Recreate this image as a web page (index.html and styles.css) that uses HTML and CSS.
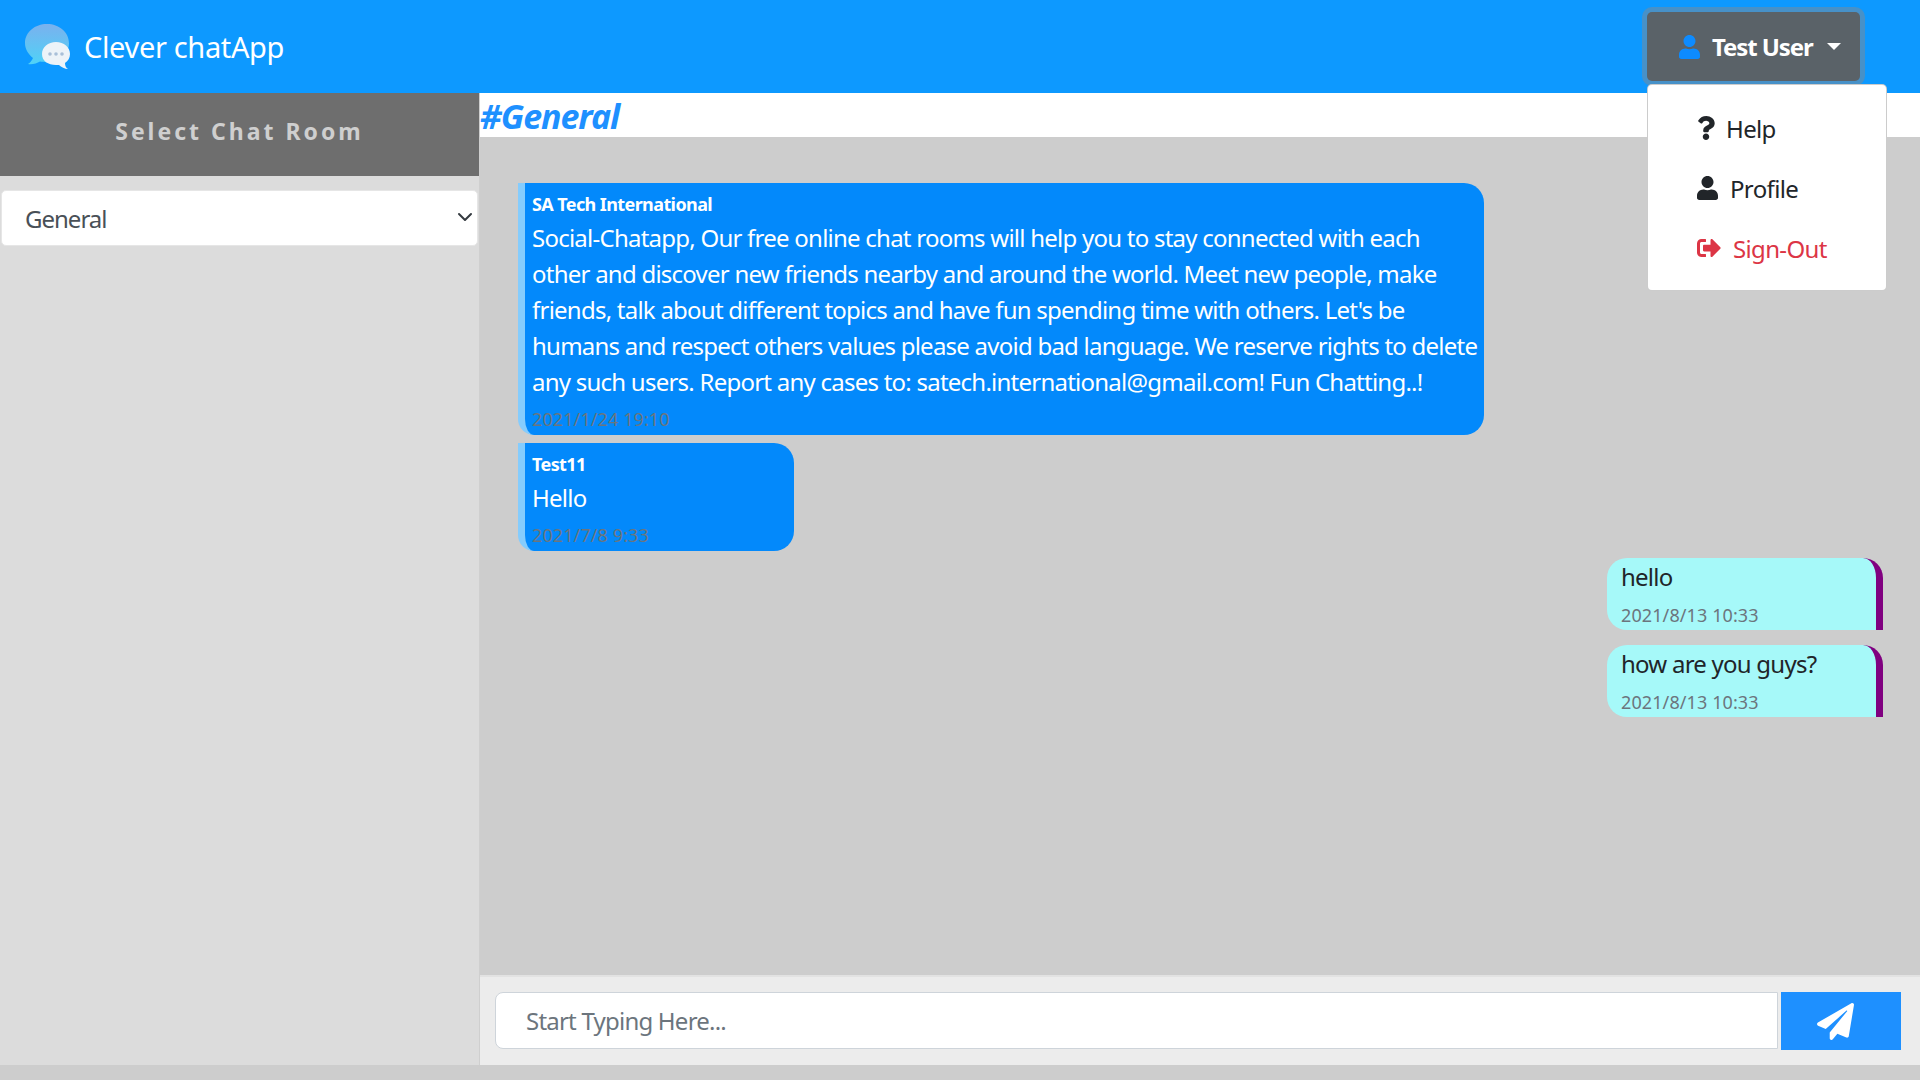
FILE: index.html
```html
<!DOCTYPE html>
<html lang="en">
<head>
    <meta charset="UTF-8">
    <meta name="viewport" content="width=device-width, initial-scale=1.0">
    <title>Clever chatApp</title>
    <link rel="stylesheet" href="styles.css">
</head>
<body>
    <header class="topbar">
        <div class="brand">
            <svg class="brand-logo" viewBox="0 0 46 46">
                <defs>
                    <linearGradient id="bubbleFill" x1="0" y1="0" x2="0" y2="1">
                        <stop offset="0" stop-color="#7ab1ee"/>
                        <stop offset="1" stop-color="#4fd2f7"/>
                    </linearGradient>
                </defs>
                <path d="M22 0C10 0 0 8 0 19c0 6 3 11 8 15-1 2-3 5-5 6 4 .6 9-.4 12-2.400 2 .4 4 .6 7 .6 12 0 22-8 22-19S34 0 22 0z" fill="url(#bubbleFill)"/>
                <path d="M31 18c-8 0-14 5-14 12s6 11 14 11h3c2 2 6 4 9 4-2-1-3-3-3-6 3-2 5-5 5-9 0-7-6-12-14-12z" fill="#edf3f8"/>
                <circle cx="25" cy="30" r="1.800" fill="#a9bfd8"/>
                <circle cx="31" cy="30" r="1.800" fill="#a9bfd8"/>
                <circle cx="37" cy="30" r="1.800" fill="#a9bfd8"/>
            </svg>
            <span class="brand-name">Clever chatApp</span>
        </div>
        <div class="user-menu">
            <button type="button" class="user-button">
                <svg class="icon user-icon" viewBox="0 0 448 512"><path d="M224 256c70.700 0 128-57.300 128-128S294.700 0 224 0 96 57.300 96 128s57.300 128 128 128zm89.600 32h-16.700c-22.200 10.200-46.900 16-72.900 16s-50.600-5.800-72.900-16h-16.700C60.200 288 0 348.200 0 422.400V464c0 26.500 21.500 48 48 48h352c26.500 0 48-21.500 48-48v-41.600c0-74.200-60.200-134.400-134.400-134.400z"/></svg>
                <span>Test User</span>
                <span class="caret"></span>
            </button>
            <div class="dropdown">
                <a class="dropdown-item">
                    <svg class="icon help-icon" viewBox="0 0 384 512"><path d="M202.021 0C122.202 0 70.503 32.703 29.914 91.026c-7.363 10.580-5.093 25.086 5.178 32.874l43.138 32.709c10.373 7.865 25.132 6.026 33.253-4.148 25.049-31.381 43.630-49.449 82.757-49.449 30.764 0 68.816 19.799 68.816 49.631 0 22.552-18.617 34.134-48.993 51.164-35.423 19.860-82.299 44.576-82.299 106.405V320c0 13.255 10.745 24 24 24h72.471c13.255 0 24-10.745 24-24v-5.773c0-42.860 125.268-44.645 125.268-160.627C377.504 66.256 286.902 0 202.021 0zM192 373.459c-38.196 0-69.271 31.075-69.271 69.271 0 38.195 31.075 69.270 69.271 69.270s69.271-31.075 69.271-69.271-31.075-69.270-69.271-69.270z"/></svg>
                    <span>Help</span>
                </a>
                <a class="dropdown-item">
                    <svg class="icon profile-icon" viewBox="0 0 448 512"><path d="M224 256c70.700 0 128-57.300 128-128S294.700 0 224 0 96 57.300 96 128s57.300 128 128 128zm89.600 32h-16.700c-22.200 10.200-46.900 16-72.900 16s-50.600-5.800-72.900-16h-16.700C60.200 288 0 348.200 0 422.400V464c0 26.500 21.500 48 48 48h352c26.500 0 48-21.500 48-48v-41.600c0-74.200-60.200-134.400-134.400-134.400z"/></svg>
                    <span>Profile</span>
                </a>
                <a class="dropdown-item danger">
                    <svg class="icon signout-icon" viewBox="0 0 512 512"><path d="M497 273L329 441c-15 15-41 4.500-41-17v-96H152c-13.300 0-24-10.700-24-24v-96c0-13.300 10.700-24 24-24h136V88c0-21.400 25.900-32 41-17l168 168c9.300 9.400 9.300 24.600 0 34zM192 436v-40c0-6.600-5.400-12-12-12H96c-17.700 0-32-14.300-32-32V160c0-17.700 14.300-32 32-32h84c6.600 0 12-5.400 12-12V76c0-6.600-5.400-12-12-12H96c-53 0-96 43-96 96v192c0 53 43 96 96 96h84c6.600 0 12-5.400 12-12z"/></svg>
                    <span>Sign-Out</span>
                </a>
            </div>
        </div>
    </header>

    <div class="layout">
        <aside class="sidebar">
            <h2 class="sidebar-title">Select Chat Room</h2>
            <div class="room-select">
                <span>General</span>
                <svg class="chevron" viewBox="0 0 16 16"><path fill="none" stroke="#343a40" stroke-linecap="round" stroke-linejoin="round" stroke-width="2" d="M2 5l6 6 6-6"/></svg>
            </div>
        </aside>

        <main class="chat">
            <h1 class="room-title">#General</h1>
            <div class="messages">
                <div class="message incoming wide">
                    <div class="sender">SA Tech International</div>
                    <p class="text">Social-Chatapp, Our free online chat rooms will help you to stay connected with each<br>other and discover new friends nearby and around the world. Meet new people, make<br>friends, talk about different topics and have fun spending time with others. Let's be<br>humans and respect others values please avoid bad language. We reserve rights to delete<br>any such users. Report any cases to: satech.international@gmail.com! Fun Chatting..!</p>
                    <div class="time">2021/1/24 19:10</div>
                </div>
                <div class="message incoming narrow">
                    <div class="sender">Test11</div>
                    <p class="text">Hello</p>
                    <div class="time">2021/7/8 9:33</div>
                </div>
                <div class="message outgoing">
                    <p class="text">hello</p>
                    <div class="time">2021/8/13 10:33</div>
                </div>
                <div class="message outgoing">
                    <p class="text">how are you guys?</p>
                    <div class="time">2021/8/13 10:33</div>
                </div>
            </div>
            <form class="composer">
                <input type="text" class="composer-input" placeholder="Start Typing Here...">
                <button type="button" class="send-button">
                    <svg class="icon send-icon" viewBox="0 0 512 512"><path d="M476 3.200L12.500 270.600c-18.100 10.400-15.800 35.600 2.200 43.200L121 358.400l287.300-253.200c5.500-4.900 13.300 2.600 8.600 8.300L176 407v80.500c0 23.600 28.500 32.900 42.500 15.800L282 426l124.600 52.200c14.200 6 30.400-2.900 33-18.200l72-432C515 7.800 493.300-6.800 476 3.200z"/></svg>
                </button>
            </form>
        </main>
    </div>
</body>
</html>
```

FILE: styles.css
```css
* {
    box-sizing: border-box;
}

body {
    font-family: "Noto Sans", "Open Sans", Arial, sans-serif;
    margin: 0;
    height: 100vh;
    overflow: hidden;
    background-color: #cdcdcd;
    color: #212529;
}

.icon {
    fill: currentColor;
    flex-shrink: 0;
}

/* top bar */
.topbar {
    height: 93px;
    background-color: #0d99ff;
    display: flex;
    justify-content: space-between;
    padding-left: 25px;
}

.brand {
    display: flex;
    align-items: center;
    gap: 13px;
}

.brand-logo {
    width: 46px;
    height: 46px;
}

.brand-name {
    color: #fff;
    font-size: 29px;
    letter-spacing: -0.35px;
}

.user-menu {
    position: relative;
    width: 273px;
    padding-top: 12px;
}

.user-button {
    width: 213px;
    height: 69px;
    display: flex;
    align-items: center;
    padding: 0 0 0 32px;
    border: none;
    border-radius: 5px;
    background-color: #5a6268;
    box-shadow: 0 0 0 5px rgba(130, 138, 145, 0.5);
    color: #fff;
    font-family: inherit;
    font-size: 24px;
    font-weight: 700;
    letter-spacing: -1.1px;
}

.user-icon {
    width: 21px;
    height: 24px;
    margin-right: 12px;
    color: #0d8bff;
}

.caret {
    margin-left: 14px;
    border-top: 7px solid #fff;
    border-left: 7px solid transparent;
    border-right: 7px solid transparent;
}

.dropdown {
    position: absolute;
    top: 84px;
    left: 0;
    width: 240px;
    height: 207px;
    padding: 13px 0 0 49px;
    background-color: #fff;
    border: 1px solid rgba(0, 0, 0, 0.2);
    border-radius: 5px;
    z-index: 10;
}

.dropdown-item {
    height: 60px;
    display: flex;
    align-items: center;
    font-size: 24px;
    letter-spacing: -0.65px;
}

.dropdown-item.danger {
    color: #dc3545;
}

.help-icon {
    width: 18px;
    height: 24px;
    margin-right: 11px;
}

.profile-icon {
    width: 21px;
    height: 24px;
    margin-right: 12px;
}

.signout-icon {
    width: 24px;
    height: 24px;
    margin-right: 12px;
}

/* main layout */
.layout {
    height: 972px;
    display: flex;
}

.sidebar {
    width: 479px;
    background-color: #dcdcdc;
    flex-shrink: 0;
}

.sidebar-title {
    height: 83px;
    margin: 0;
    padding-bottom: 8px;
    display: flex;
    align-items: center;
    justify-content: center;
    background-color: #6e6e6e;
    color: #cfcfcf;
    font-size: 23px;
    font-weight: 700;
    letter-spacing: 3px;
}

.room-select {
    height: 56px;
    margin: 14px 1px 0;
    padding: 0 4px 0 23px;
    display: flex;
    align-items: center;
    justify-content: space-between;
    background-color: #fff;
    border: 1px solid #e6e6e6;
    border-radius: 5px;
    color: #495057;
    font-size: 24px;
    letter-spacing: -1px;
}

.chevron {
    width: 16px;
    height: 16px;
    margin-bottom: 2px;
}

.chat {
    flex: 1;
    min-width: 0;
    display: flex;
    flex-direction: column;
    border-left: 1px solid #cfcfcf;
}

.room-title {
    height: 44px;
    margin: 0;
    background-color: #fff;
    color: #1e90ff;
    font-size: 34px;
    font-style: italic;
    font-weight: 700;
    line-height: 46px;
    letter-spacing: -1.1px;
}

/* messages */
.messages {
    flex: 1;
    padding: 46px 37px 0 38px;
    display: flex;
    flex-direction: column;
}

.message {
    margin-bottom: 8px;
}

.text {
    margin: 0;
    font-size: 24px;
    line-height: 36px;
    letter-spacing: -0.76px;
    white-space: nowrap;
}

.sender {
    color: #fff;
    font-size: 18px;
    font-weight: 700;
    line-height: 24px;
    letter-spacing: -0.6px;
}

.time {
    font-size: 18px;
    line-height: 24px;
    letter-spacing: 0.1px;
    color: #6c757d;
}

.incoming {
    align-self: flex-start;
    padding: 9px 0 0 7px;
    background-color: #0389fb;
    border-left: 7px solid #85ccfd;
    border-radius: 0 20px 20px 16px;
    color: #fff;
}

.wide {
    width: 966px;
    height: 252px;
}

.narrow {
    width: 276px;
    height: 108px;
    margin-bottom: 7px;
}

.incoming .text {
    margin-top: 4px;
}

.incoming .time {
    margin-top: 7px;
}

.outgoing {
    align-self: flex-end;
    width: 276px;
    height: 72px;
    margin-bottom: 15px;
    padding: 1px 0 0 14px;
    background-color: #a6f9f9;
    border-right: 7px solid #800080;
    border-radius: 20px 20px 0 20px;
}

.outgoing .time {
    margin-top: 8px;
}

/* composer */
.composer {
    height: 90px;
    padding: 15px 19px 0 15px;
    display: flex;
    gap: 3px;
    background-color: #ececec;
    border-top: 2px solid #e2e2e2;
}

.composer-input {
    flex: 1;
    height: 57px;
    padding: 0 30px;
    border: 1px solid #ced4da;
    border-radius: 8px 0 0 8px;
    background-color: #fff;
    font-family: inherit;
    font-size: 24px;
    letter-spacing: -0.78px;
}

.composer-input::placeholder {
    color: #6c757d;
}

.send-button {
    width: 120px;
    height: 58px;
    padding: 0 12px 0 0;
    display: flex;
    align-items: center;
    justify-content: center;
    border: none;
    background-color: #1e90ff;
    color: #fff;
}

.send-icon {
    width: 37px;
    height: 37px;
}
```
